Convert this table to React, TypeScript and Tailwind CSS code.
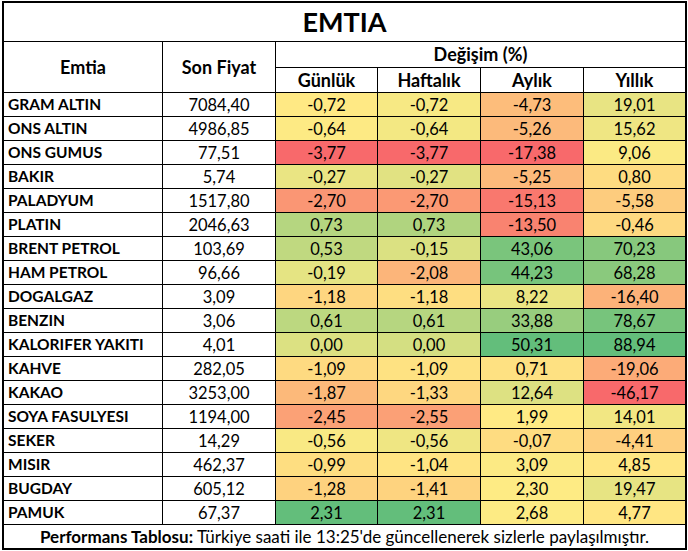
type Row = { name: string; price: string; d: number; w: number; m: number; y: number };

const rows: Row[] = [
  { name: "GRAM ALTIN", price: "7084,40", d: -0.72, w: -0.72, m: -4.73, y: 19.01 },
  { name: "ONS ALTIN", price: "4986,85", d: -0.64, w: -0.64, m: -5.26, y: 15.62 },
  { name: "ONS GUMUS", price: "77,51", d: -3.77, w: -3.77, m: -17.38, y: 9.06 },
  { name: "BAKIR", price: "5,74", d: -0.27, w: -0.27, m: -5.25, y: 0.8 },
  { name: "PALADYUM", price: "1517,80", d: -2.7, w: -2.7, m: -15.13, y: -5.58 },
  { name: "PLATIN", price: "2046,63", d: 0.73, w: 0.73, m: -13.5, y: -0.46 },
  { name: "BRENT PETROL", price: "103,69", d: 0.53, w: -0.15, m: 43.06, y: 70.23 },
  { name: "HAM PETROL", price: "96,66", d: -0.19, w: -2.08, m: 44.23, y: 68.28 },
  { name: "DOGALGAZ", price: "3,09", d: -1.18, w: -1.18, m: 8.22, y: -16.4 },
  { name: "BENZIN", price: "3,06", d: 0.61, w: 0.61, m: 33.88, y: 78.67 },
  { name: "KALORIFER YAKITI", price: "4,01", d: 0.0, w: 0.0, m: 50.31, y: 88.94 },
  { name: "KAHVE", price: "282,05", d: -1.09, w: -1.09, m: 0.71, y: -19.06 },
  { name: "KAKAO", price: "3253,00", d: -1.87, w: -1.33, m: 12.64, y: -46.17 },
  { name: "SOYA FASULYESI", price: "1194,00", d: -2.45, w: -2.55, m: 1.99, y: 14.01 },
  { name: "SEKER", price: "14,29", d: -0.56, w: -0.56, m: -0.07, y: -4.41 },
  { name: "MISIR", price: "462,37", d: -0.99, w: -1.04, m: 3.09, y: 4.85 },
  { name: "BUGDAY", price: "605,12", d: -1.28, w: -1.41, m: 2.3, y: 19.47 },
  { name: "PAMUK", price: "67,37", d: 2.31, w: 2.31, m: 2.68, y: 4.77 },
];

const keys = ["d", "w", "m", "y"] as const;

// Excel-style 3 colour scale: min red, median yellow, max green (per column)
const RED = [248, 105, 107];
const YELLOW = [255, 235, 132];
const GREEN = [99, 190, 123];

function stats(vals: number[]) {
  const s = [...vals].sort((a, b) => a - b);
  const n = s.length;
  const mid = n % 2 ? s[(n - 1) / 2] : (s[n / 2 - 1] + s[n / 2]) / 2;
  return { min: s[0], mid, max: s[n - 1] };
}

const colStats = keys.map((k) => stats(rows.map((r) => r[k])));

function mix(a: number[], b: number[], t: number) {
  const c = a.map((v, i) => Math.round(v + (b[i] - v) * t));
  return `rgb(${c[0]}, ${c[1]}, ${c[2]})`;
}

function heat(v: number, col: number) {
  const { min, mid, max } = colStats[col];
  if (v <= mid) return mix(RED, YELLOW, mid === min ? 1 : (v - min) / (mid - min));
  return mix(YELLOW, GREEN, (v - mid) / (max - mid));
}

const fmt = (v: number) => v.toFixed(2).replace(".", ",");

export default function App() {
  return (
    <div className="h-[551px] w-[688px] bg-white pl-[2px] pt-[1px] font-['Lato',sans-serif] text-black">
      <div className="grid w-[685px] grid-cols-[158px_112px_101px_102px_102px_101px] grid-rows-[38px_25px_24px_repeat(18,23px)_23px] gap-px border-2 border-black bg-black">
        {/* Title */}
        <div className="col-span-6 flex items-center justify-center bg-white text-[27px] font-bold">
          EMTIA
        </div>

        {/* Header */}
        <div className="row-span-2 flex items-center justify-center bg-white text-[18px] font-bold">
          Emtia
        </div>
        <div className="row-span-2 flex items-center justify-center bg-white text-[18px] font-bold">
          Son Fiyat
        </div>
        <div className="col-span-4 flex items-center justify-center bg-white text-[18px] font-bold">
          Değişim (%)
        </div>
        <div className="flex items-center justify-center bg-white pt-px text-[18px] font-bold">Günlük</div>
        <div className="flex items-center justify-center bg-white pt-px text-[18px] font-bold">Haftalık</div>
        <div className="flex items-center justify-center bg-white pt-px text-[18px] font-bold">Aylık</div>
        <div className="flex items-center justify-center bg-white pt-px text-[18px] font-bold">Yıllık</div>

        {/* Rows */}
        {rows.map((r) => (
          <div key={r.name} className="contents">
            <div className="flex items-center bg-white pl-1 pt-px text-[15.5px] font-bold">{r.name}</div>
            <div className="flex items-center justify-center bg-white pt-px text-[16.5px]">{r.price}</div>
            {keys.map((k, i) => (
              <div
                key={k}
                className="flex items-center justify-center pt-px text-[16.5px]"
                style={{ backgroundColor: heat(r[k], i) }}
              >
                {fmt(r[k])}
              </div>
            ))}
          </div>
        ))}

        {/* Footer */}
        <div className="col-span-6 flex items-center justify-center bg-white pt-px text-[17px]">
          <span className="mr-1 font-bold">Performans Tablosu:</span>
          Türkiye saati ile 13:25'de güncellenerek sizlerle paylaşılmıştır.
        </div>
      </div>
    </div>
  );
}
